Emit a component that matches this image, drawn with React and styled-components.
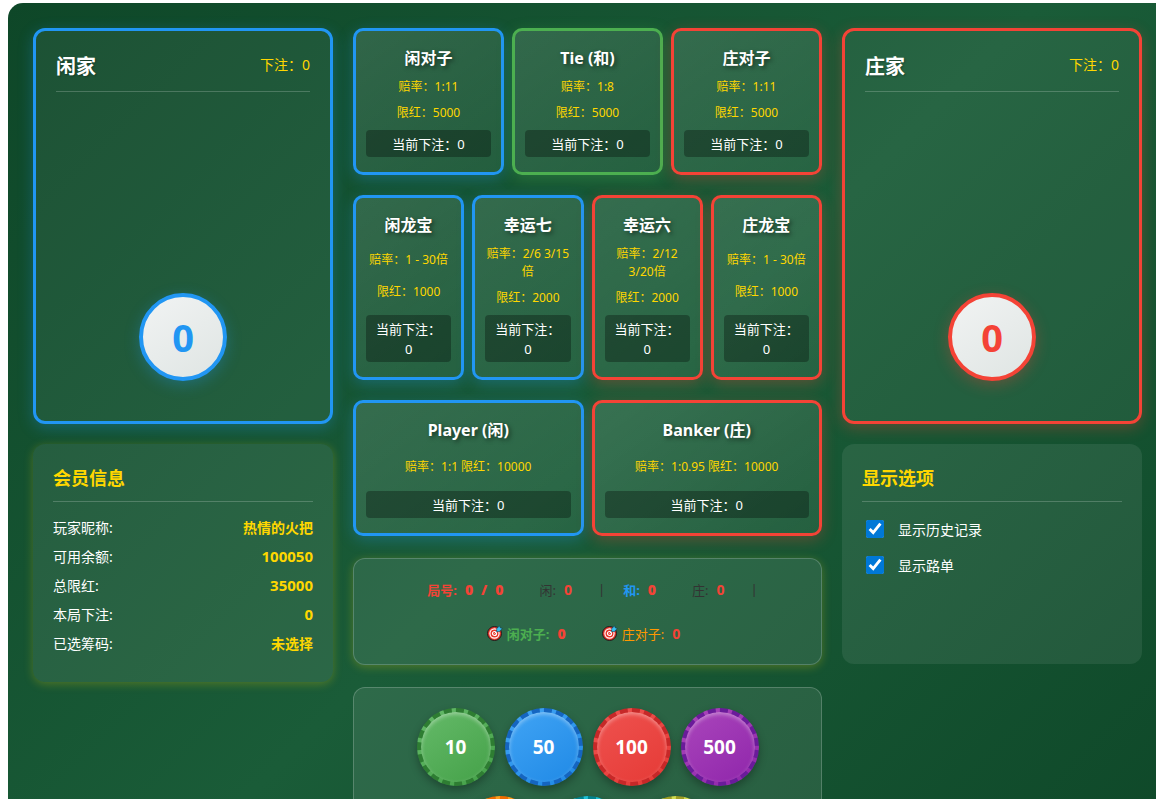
import React, { useState } from 'react';
import styled, { createGlobalStyle } from 'styled-components';

const COLORS = {
  blue: '#2196f3',
  red: '#f44336',
  green: '#4caf50',
  orange: '#ff9800',
  gold: '#ffd700',
  dark: '#333333',
};

const GLOWS = {
  blue: 'rgba(33, 150, 243, 0.3)',
  red: 'rgba(244, 67, 54, 0.3)',
  green: 'rgba(76, 175, 80, 0.3)',
};

const pairBets = [
  { name: '闲对子', tone: 'blue', lines: ['赔率：1:11', '限红：5000'] },
  { name: 'Tie (和)', tone: 'green', lines: ['赔率：1:8', '限红：5000'] },
  { name: '庄对子', tone: 'red', lines: ['赔率：1:11', '限红：5000'] },
];

const sideBets = [
  { name: '闲龙宝', tone: 'blue', lines: ['赔率：1 - 30倍', '限红：1000'] },
  { name: '幸运七', tone: 'blue', lines: ['赔率：2/6 3/15倍', '限红：2000'] },
  { name: '幸运六', tone: 'red', lines: ['赔率：2/12 3/20倍', '限红：2000'] },
  { name: '庄龙宝', tone: 'red', lines: ['赔率：1 - 30倍', '限红：1000'] },
];

const mainBets = [
  { name: 'Player (闲)', tone: 'blue', lines: ['赔率：1:1 限红：10000'] },
  { name: 'Banker (庄)', tone: 'red', lines: ['赔率：1:0.95 限红：10000'] },
];

const member = [
  { label: '玩家昵称:', value: '热情的火把' },
  { label: '可用余额:', value: '100050', numeric: true },
  { label: '总限红:', value: '35000', numeric: true },
  { label: '本局下注:', value: '0', numeric: true },
  { label: '已选筹码:', value: '未选择' },
];

const chips = [
  { value: 10, from: '#66bb6a', to: '#43a047', edge: '#2e7d32' },
  { value: 50, from: '#42a5f5', to: '#1e88e5', edge: '#1565c0' },
  { value: 100, from: '#ef5350', to: '#e53935', edge: '#c62828' },
  { value: 500, from: '#ab47bc', to: '#8e24aa', edge: '#6a1b9a' },
  { from: '#ffa726', to: '#fb8c00', edge: '#ef6c00' },
  { from: '#26c6da', to: '#00acc1', edge: '#00838f' },
  { from: '#d4e157', to: '#c0ca33', edge: '#9e9d24' },
];

const TargetIcon = () => (
  <Target viewBox="0 0 16 16" aria-hidden="true">
    <circle cx="7.5" cy="8.5" r="7" fill="#e8352a" stroke="#1c1c1c" />
    <circle cx="7.5" cy="8.5" r="4.6" fill="none" stroke="#ffffff" strokeWidth="1.2" />
    <circle cx="7.5" cy="8.5" r="2" fill="none" stroke="#ffffff" strokeWidth="1.2" />
    <path d="M7.5 8.5 11 5" stroke="#ffffff" />
    <path d="M9.4 6.8 9.8 3.6 12.6.8 13.2 2.8 15.3 3.4 12.6 6.4Z" fill="#37c3f5" stroke="#12384a" strokeWidth=".6" />
  </Target>
);

const Side = ({ name, tone }) => (
  <SidePanel $tone={tone}>
    <SideHeader>
      <SideTitle>{name}</SideTitle>
      <SideBet>下注：0</SideBet>
    </SideHeader>
    <Score $tone={tone}>0</Score>
  </SidePanel>
);

const BetRow = ({ bets }) => (
  <Bets $count={bets.length}>
    {bets.map((bet) => (
      <BetCard key={bet.name} type="button" $tone={bet.tone} $tall={bets.length === 2}>
        <BetName>{bet.name}</BetName>
        {bet.lines.map((line) => (
          <BetLine key={line}>{line}</BetLine>
        ))}
        <CurrentBet>当前下注：0</CurrentBet>
      </BetCard>
    ))}
  </Bets>
);

const App = () => {
  const [showHistory, setShowHistory] = useState(true);
  const [showRoad, setShowRoad] = useState(true);

  return (
    <>
      <GlobalStyle />
      <Table>
        <Column>
          <Side name="闲家" tone="blue" />
          <Panel $glow>
            <PanelTitle>会员信息</PanelTitle>
            <InfoList>
              {member.map((row) => (
                <InfoRow key={row.label}>
                  <dt>{row.label}</dt>
                  <InfoValue $numeric={row.numeric}>{row.value}</InfoValue>
                </InfoRow>
              ))}
            </InfoList>
          </Panel>
        </Column>

        <Column>
          <BetRow bets={pairBets} />
          <BetRow bets={sideBets} />
          <BetRow bets={mainBets} />
          <Stats>
            <StatRow>
              <Stat $tone="red" $bold>局号: <b>0</b> <b>/</b> <b>0</b></Stat>
              <Stat $tone="dark">闲: <b>0</b></Stat>
              <Divider>|</Divider>
              <Stat $tone="blue" $bold>和: <b>0</b></Stat>
              <Stat $tone="dark">庄: <b>0</b></Stat>
              <Divider>|</Divider>
            </StatRow>
            <StatRow>
              <Stat $tone="green" $bold><TargetIcon />闲对子: <b>0</b></Stat>
              <Stat $tone="orange"><TargetIcon />庄对子: <b>0</b></Stat>
            </StatRow>
          </Stats>
          <ChipTray>
            {chips.map((chip) => (
              <Chip key={chip.edge} type="button" $from={chip.from} $to={chip.to} $edge={chip.edge}>
                {chip.value}
              </Chip>
            ))}
          </ChipTray>
        </Column>

        <Column>
          <Side name="庄家" tone="red" />
          <Panel $roomy>
            <PanelTitle>显示选项</PanelTitle>
            <Option>
              <Check type="checkbox" checked={showHistory} onChange={() => setShowHistory(!showHistory)} />
              显示历史记录
            </Option>
            <Option>
              <Check type="checkbox" checked={showRoad} onChange={() => setShowRoad(!showRoad)} />
              显示路单
            </Option>
          </Panel>
        </Column>
      </Table>
    </>
  );
};

const GlobalStyle = createGlobalStyle`
  * {
    box-sizing: border-box;
  }

  body {
    margin: 3px 0 0 8px;
    background: #ffffff;
    color: #ffffff;
    font-family: "Noto Sans", "Noto Sans CJK SC", sans-serif;
    font-size: 14px;
  }

  button {
    font-family: inherit;
    color: inherit;
    cursor: pointer;
  }
`;

const Table = styled.main`
  display: grid;
  grid-template-columns: 300px minmax(0, 1fr) 300px;
  align-items: start;
  gap: 20px;
  padding: 25px 14px 25px 25px;
  border-radius: 15px 0 0 15px;
  background: linear-gradient(135deg, #0e4728 0%, #1a5c38 50%, #0e4728 100%);
`;

const Column = styled.div`
  display: flex;
  flex-direction: column;
  gap: 20px;
`;

const SidePanel = styled.section`
  display: flex;
  flex-direction: column;
  align-items: center;
  justify-content: space-between;
  min-height: 396px;
  padding: 20px 20px 40px;
  border: 3px solid ${(p) => COLORS[p.$tone]};
  border-radius: 12px;
  background: rgba(255, 255, 255, 0.06);
  box-shadow: 0 4px 15px ${(p) => GLOWS[p.$tone]};
`;

const SideHeader = styled.header`
  display: flex;
  align-items: center;
  justify-content: space-between;
  width: 100%;
  padding-bottom: 8px;
  border-bottom: 1px solid rgba(255, 255, 255, 0.2);
`;

const SideTitle = styled.h2`
  margin: 0;
  font-size: 20px;
  line-height: 32px;
  text-shadow: 1px 1px 2px rgba(0, 0, 0, 0.3);
`;

const SideBet = styled.span`
  color: ${COLORS.gold};
  font-size: 14px;
  line-height: 28px;
  align-self: flex-start;
`;

const Score = styled.div`
  display: flex;
  align-items: center;
  justify-content: center;
  width: 88px;
  height: 88px;
  border: 4px solid ${(p) => COLORS[p.$tone]};
  border-radius: 50%;
  background: linear-gradient(145deg, #f1f3f3, #dfe5e3);
  box-shadow: 0 4px 15px ${(p) => GLOWS[p.$tone]};
  color: ${(p) => COLORS[p.$tone]};
  font-size: 38px;
  font-weight: bold;
  line-height: 78px;
`;

const Panel = styled.section`
  min-height: ${(p) => (p.$roomy ? '220px' : '238px')};
  padding: 20px;
  border-radius: 12px;
  background: rgba(255, 255, 255, 0.08);
  box-shadow: ${(p) => (p.$glow ? '0 2px 10px rgba(255, 215, 0, 0.25)' : 'none')};
`;

const PanelTitle = styled.h3`
  margin: 0 0 11px;
  padding-bottom: 8px;
  border-bottom: 1px solid rgba(255, 255, 255, 0.2);
  color: ${COLORS.gold};
  font-size: 18px;
  line-height: 29px;
`;

const InfoList = styled.dl`
  margin: 0;
`;

const InfoRow = styled.div`
  display: flex;
  justify-content: space-between;
  line-height: 29px;
`;

const InfoValue = styled.dd`
  margin: 0;
  color: ${COLORS.gold};
  font-size: ${(p) => (p.$numeric ? '15px' : '14px')};
  font-weight: bold;
`;

const Option = styled.label`
  display: flex;
  align-items: center;
  gap: 14px;
  height: 36px;
  padding-left: 4px;
  cursor: pointer;

  &:first-of-type {
    margin-top: -2px;
  }
`;

const Check = styled.input`
  width: 18px;
  height: 18px;
  margin: 0;
  accent-color: #0078d7;
`;

const Bets = styled.div`
  display: grid;
  grid-template-columns: repeat(${(p) => p.$count}, minmax(0, 1fr));
  gap: 8px;
`;

const BetCard = styled.button`
  display: flex;
  flex-direction: column;
  align-items: stretch;
  justify-content: space-between;
  gap: 8px;
  min-height: ${(p) => (p.$tall ? '136px' : '0')};
  padding: 15px 10px;
  border: 3px solid ${(p) => COLORS[p.$tone]};
  border-radius: 10px;
  background: linear-gradient(145deg, rgba(255, 255, 255, 0.13), rgba(255, 255, 255, 0.06));
  box-shadow: 0 4px 15px ${(p) => GLOWS[p.$tone]};
  text-align: center;
`;

const BetName = styled.span`
  font-size: 16px;
  font-weight: bold;
  line-height: 24px;
  text-shadow: 2px 2px 4px rgba(0, 0, 0, 0.5);
`;

const BetLine = styled.span`
  color: ${COLORS.gold};
  font-size: 12px;
  line-height: 18px;
`;

const CurrentBet = styled.span`
  padding: 4px 8px 3px;
  border-radius: 4px;
  background: rgba(0, 0, 0, 0.3);
  font-size: 13px;
  line-height: 20px;
`;

const Stats = styled.section`
  margin-top: 2px;
  padding: 8px 20px 9px;
  border: 1px solid rgba(255, 255, 255, 0.2);
  border-radius: 12px;
  background: rgba(255, 255, 255, 0.09);
  box-shadow: 0 2px 10px rgba(255, 215, 0, 0.25);
`;

const StatRow = styled.div`
  display: flex;
  align-items: center;
  justify-content: center;
  gap: 8px;
  height: 44px;
  padding-right: 8px;
`;

const Stat = styled.span`
  display: flex;
  align-items: center;
  gap: 8px;
  padding: 0 14px;
  color: ${(p) => COLORS[p.$tone]};
  font-size: 13px;
  font-weight: ${(p) => (p.$bold ? 'bold' : 'normal')};

  b {
    color: ${COLORS.red};
    font-size: 14px;
  }
`;

const Target = styled.svg`
  width: 16px;
  height: 16px;
  margin-right: -4px;
`;

const Divider = styled.span`
  margin: 0 -4px 0 4px;
  color: ${COLORS.dark};
  font-size: 13px;
`;

const ChipTray = styled.section`
  display: flex;
  flex-wrap: wrap;
  justify-content: center;
  gap: 10px;
  margin-top: 2px;
  padding: 20px;
  border: 1px solid rgba(255, 255, 255, 0.2);
  border-radius: 12px;
  background: rgba(255, 255, 255, 0.09);
`;

const Chip = styled.button`
  width: 78px;
  height: 78px;
  padding: 0;
  border: 4px dashed ${(p) => p.$edge};
  border-radius: 50%;
  background: linear-gradient(145deg, ${(p) => p.$from}, ${(p) => p.$to}) border-box;
  box-shadow: 0 4px 8px rgba(0, 0, 0, 0.3), inset 0 2px 4px rgba(255, 255, 255, 0.4);
  font-size: 19px;
  font-weight: bold;
`;

export default App;
